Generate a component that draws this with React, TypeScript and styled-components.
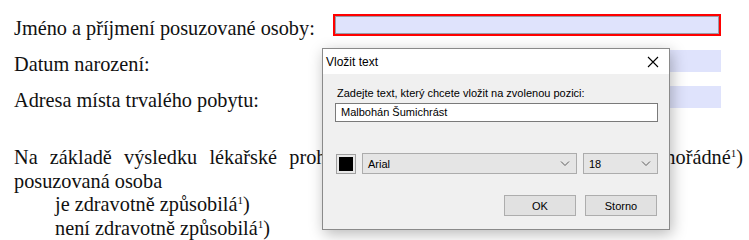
import styled, { createGlobalStyle } from 'styled-components';

const GlobalStyle = createGlobalStyle`
  html, body {
    margin: 0;
    padding: 0;
    background: #ffffff;
  }
  body {
    width: 749px;
    height: 240px;
    overflow: hidden;
  }
`;

const App = () => {
    return (
        <Page>
            <GlobalStyle />
            <Form>
                <Label>Jméno a příjmení posuzované osoby:</Label>
                <Field $active />
                <Label>Datum narození:</Label>
                <Field />
                <Label>Adresa místa trvalého pobytu:</Label>
                <Field />
            </Form>
            <Paragraph>
                <Justified>
                    Na základě výsledku lékařské prohlídky (vstupní, periodické, ostatní, mimořádné<sup>1</sup>)
                </Justified>
                <Line>posuzovaná osoba</Line>
                <Line $indent>je zdravotně způsobilá<sup>1</sup>)</Line>
                <Line $indent>není zdravotně způsobilá<sup>1</sup>)</Line>
            </Paragraph>

            <Dialog>
                <TitleBar>
                    <span>Vložit text</span>
                    <CloseIcon width="12" height="12" viewBox="0 0 12 12">
                        <path d="M1 1 L11 11 M11 1 L1 11" stroke="#000" strokeWidth="1.1" fill="none" />
                    </CloseIcon>
                </TitleBar>
                <Body>
                    <Prompt>Zadejte text, který chcete vložit na zvolenou pozici:</Prompt>
                    <TextBox>Malbohán Šumichrást</TextBox>
                    <Options>
                        <Swatch>
                            <span />
                        </Swatch>
                        <Combo $width={215}>
                            <span>Arial</span>
                            <Chevron />
                        </Combo>
                        <Combo $width={75}>
                            <span>18</span>
                            <Chevron />
                        </Combo>
                    </Options>
                    <Buttons>
                        <Button>OK</Button>
                        <Button>Storno</Button>
                    </Buttons>
                </Body>
            </Dialog>
        </Page>
    );
};

const Chevron = () => (
    <ChevronSvg width="10" height="6" viewBox="0 0 10 6">
        <path d="M1 0.5 L5 4.5 L9 0.5" stroke="#5c5c5c" strokeWidth="1" fill="none" />
    </ChevronSvg>
);

export default App;

const Page = styled.div`
  position: relative;
  width: 749px;
  height: 240px;
  padding: 14px 0 0 14px;
  box-sizing: border-box;
  font-family: 'Liberation Serif', 'Times New Roman', serif;
  font-size: 20.3px;
  color: #111;
`;

const Form = styled.div`
  display: grid;
  grid-template-columns: 319px 388px;
  grid-auto-rows: 22px;
  row-gap: 14px;
`;

const Label = styled.div`
  line-height: 22px;
  padding-top: 3px;
  white-space: nowrap;
`;

const Field = styled.div<{ $active?: boolean }>`
  background: #dfe3fc;
  box-sizing: border-box;
  height: 22px;
  border: ${(p) => (p.$active ? '2px solid #f00' : 'none')};
  box-shadow: ${(p) => (p.$active ? 'inset 0 0 0 1px #9a9aa8' : 'none')};
`;

const Paragraph = styled.div`
  margin-top: 38px;
  width: 729px;
  line-height: 23.5px;

  sup {
    font-size: 11px;
    line-height: 0;
    vertical-align: 7px;
  }
`;

const Justified = styled.div`
  text-align: justify;
  text-align-last: justify;
`;

const Line = styled.div<{ $indent?: boolean }>`
  padding-left: ${(p) => (p.$indent ? '41px' : '0')};
`;

const Dialog = styled.div`
  position: absolute;
  left: 322px;
  top: 48px;
  width: 348px;
  height: 182px;
  box-sizing: border-box;
  border: 1px solid #8a8a8a;
  background: #f0f0f0;
  box-shadow: 2px 4px 14px rgba(0, 0, 0, 0.28);
  display: flex;
  flex-direction: column;
  font-family: 'Liberation Sans', Arial, sans-serif;
  color: #000;
`;

const TitleBar = styled.div`
  height: 25px;
  background: #fff;
  display: flex;
  align-items: center;
  justify-content: space-between;
  padding: 0 10px 0 3px;
  font-size: 12px;
`;

const CloseIcon = styled.svg`
  display: block;
`;

const Body = styled.div`
  flex: 1;
  display: flex;
  flex-direction: column;
  padding: 11px 11px 0 12px;
  font-size: 11px;
`;

const Prompt = styled.div`
  height: 16px;
  line-height: 16px;
  padding-left: 2px;
`;

const TextBox = styled.div`
  margin-top: 2px;
  height: 19px;
  box-sizing: border-box;
  border: 1px solid #7a7a7a;
  background: #fff;
  padding: 0 5px;
  line-height: 17px;
`;

const Options = styled.div`
  margin-top: 31px;
  display: flex;
  align-items: center;
  gap: 6px;
  padding-left: 1px;
`;

const Swatch = styled.div`
  width: 20px;
  height: 20px;
  box-sizing: border-box;
  border: 1px solid #a0a0a0;
  background: #e8e8e8;
  padding: 2px;

  span {
    display: block;
    width: 14px;
    height: 14px;
    background: #000;
  }
`;

const Combo = styled.div<{ $width: number }>`
  width: ${(p) => p.$width}px;
  height: 21px;
  box-sizing: border-box;
  border: 1px solid #acacac;
  background: #e5e5e5;
  display: flex;
  align-items: center;
  justify-content: space-between;
  padding: 0 6px 0 5px;
`;

const ChevronSvg = styled.svg`
  display: block;
`;

const Buttons = styled.div`
  margin-top: 21px;
  display: flex;
  justify-content: flex-end;
  gap: 9px;
  padding-right: 1px;
`;

const Button = styled.div`
  width: 72px;
  height: 21px;
  box-sizing: border-box;
  border: 1px solid #adadad;
  background: #e1e1e1;
  display: flex;
  align-items: center;
  justify-content: center;
`;
